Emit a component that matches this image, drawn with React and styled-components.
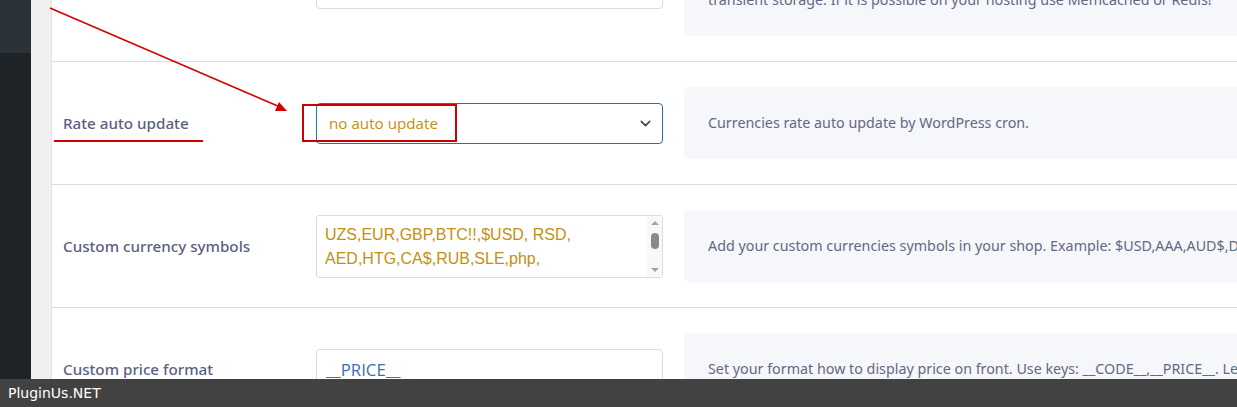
import React from "react";
import styled, { createGlobalStyle } from "styled-components";
import { ChevronDown } from "lucide-react";

const GlobalStyle = createGlobalStyle`
  * {
    box-sizing: border-box;
    margin: 0;
    padding: 0;
  }
  body {
    background: #f0f0f1;
    overflow: hidden;
    font-family: "Noto Sans", Lato, sans-serif;
  }
`;

const Layout = styled.div`
  display: flex;
  height: 100vh;
  width: 100%;
`;

const Sidebar = styled.aside`
  width: 31px;
  flex-shrink: 0;
  background: #1d2327;
`;

const SidebarActive = styled.div`
  height: 53px;
  background: #2c3338;
`;

const Gutter = styled.div`
  width: 20px;
  flex-shrink: 0;
  background: #f0f0f1;
`;

const Panel = styled.main`
  flex: 1;
  background: #fff;
  border-left: 1px solid #e4e4e7;
  overflow: hidden;
`;

const SettingsList = styled.div`
  margin-top: -85px;
`;

const Row = styled.div`
  display: grid;
  grid-template-columns: 243px 347px 680px;
  column-gap: 21px;
  align-items: center;
  padding: 25px 0;
  border-bottom: 1px solid #dcdcde;
`;

const Label = styled.div`
  padding-left: 11px;
  font-size: 15.2px;
  font-weight: 500;
  color: #5b6080;
`;

const FieldWrap = styled.div`
  position: relative;
`;

const TextInput = styled.input`
  width: 100%;
  height: 41px;
  border: 1px solid #dcdcde;
  border-radius: 4px;
  padding: 0 9px;
  font-family: "Open Sans", "Noto Sans", sans-serif;
  font-size: 16.8px;
  color: ${(p) => p.$color || "#3c6fa6"};
  background: #fff;
  outline: none;
`;

const Select = styled.select`
  appearance: none;
  width: 100%;
  height: 41px;
  border: 1px solid #2271b1;
  border-radius: 4px;
  padding: 0 32px 0 12px;
  font-family: "Open Sans", "Noto Sans", sans-serif;
  font-size: 15.2px;
  color: #c4900f;
  background: #fff;
  outline: none;
`;

const SelectArrow = styled.span`
  position: absolute;
  right: 9px;
  top: 12px;
  display: flex;
  color: #3c434a;
  pointer-events: none;
`;

const TextArea = styled.textarea`
  display: block;
  width: 100%;
  height: 63px;
  border: 1px solid #dcdcde;
  border-radius: 3px;
  padding: 7px 24px 7px 8px;
  font-family: "Liberation Sans", Arial, sans-serif;
  font-size: 16px;
  line-height: 24px;
  color: #c4900f;
  resize: none;
  overflow: hidden;
  outline: none;
`;

const Scrollbar = styled.div`
  position: absolute;
  top: 1px;
  right: 1px;
  bottom: 1px;
  width: 15px;
  background: #f8f8f8;
  display: flex;
  flex-direction: column;
  align-items: center;
  justify-content: space-between;
  padding: 5px 0;
`;

const Arrow = styled.span`
  width: 0;
  height: 0;
  border-left: 4px solid transparent;
  border-right: 4px solid transparent;
  ${(p) =>
    p.$down
      ? "border-top: 4px solid #a3a3a3;"
      : "border-bottom: 4px solid #a3a3a3;"}
`;

const Thumb = styled.span`
  width: 8px;
  height: 16px;
  border-radius: 4px;
  background: #8a8a8a;
  margin-top: -10px;
`;

const Description = styled.div`
  background: #f6f7fb;
  border-radius: 5px;
  padding: 24px 24px;
  font-size: 14.3px;
  line-height: 24px;
  color: #636884;
  white-space: nowrap;
`;

const Footer = styled.footer`
  position: fixed;
  left: 0;
  right: 0;
  bottom: 0;
  height: 28px;
  background: #424242;
  display: flex;
  align-items: center;
  padding-left: 8px;
  font-family: "DejaVu Sans", sans-serif;
  font-size: 14px;
  color: #fff;
`;

const Annotations = styled.svg`
  position: fixed;
  top: 0;
  left: 0;
  pointer-events: none;
`;

const rows = [
  {
    label: "Rate auto update",
    field: "select",
    value: "no auto update",
    desc: "Currencies rate auto update by WordPress cron.",
  },
  {
    label: "Custom currency symbols",
    field: "textarea",
    value: "UZS,EUR,GBP,BTC!!,$USD, RSD,\nAED,HTG,CA$,RUB,SLE,php,",
    desc: "Add your custom currencies symbols in your shop. Example: $USD,AAA,AUD$,DDD,X $ - separated by commas",
  },
  {
    label: "Custom price format",
    field: "input",
    value: "__PRICE__",
    desc: "Set your format how to display price on front. Use keys: __CODE__,__PRICE__. Leave it empty to use default format.",
  },
];

function Field({ row }) {
  if (row.field === "select") {
    return (
      <FieldWrap>
        <Select defaultValue={row.value}>
          <option>{row.value}</option>
          <option>hourly</option>
          <option>twicedaily</option>
          <option>daily</option>
        </Select>
        <SelectArrow>
          <ChevronDown size={17} strokeWidth={2.2} />
        </SelectArrow>
      </FieldWrap>
    );
  }
  if (row.field === "textarea") {
    return (
      <FieldWrap>
        <TextArea readOnly value={row.value} />
        <Scrollbar>
          <Arrow />
          <Thumb />
          <Arrow $down />
        </Scrollbar>
      </FieldWrap>
    );
  }
  return (
    <FieldWrap>
      <TextInput readOnly value={row.value} />
    </FieldWrap>
  );
}

export default function App() {
  return (
    <>
      <GlobalStyle />
      <Layout>
        <Sidebar>
          <SidebarActive />
        </Sidebar>
        <Gutter />
        <Panel>
          <SettingsList>
            <Row>
              <Label>Currency storage</Label>
              <FieldWrap>
                <TextInput readOnly value="transient" $color="#c4900f" />
              </FieldWrap>
              <Description>
                Currency data storage. It is not recommended to use session if your site has a lot of visitors, use
                <br />
                transient storage. If it is possible on your hosting use Memcached or Redis!
              </Description>
            </Row>
            {rows.map((row) => (
              <Row key={row.label}>
                <Label>{row.label}</Label>
                <Field row={row} />
                <Description>{row.desc}</Description>
              </Row>
            ))}
          </SettingsList>
        </Panel>
      </Layout>

      <Annotations width="1237" height="407" viewBox="0 0 1237 407">
        <line x1="50" y1="8" x2="280" y2="107" stroke="#d40000" strokeWidth="1.6" />
        <polygon points="287,111 279,102 275,111" fill="#d40000" />
        <rect x="303" y="105" width="153" height="36" fill="none" stroke="#cc0000" strokeWidth="2" />
        <line x1="54" y1="141" x2="203" y2="141" stroke="#d40000" strokeWidth="2" />
      </Annotations>

      <Footer>PluginUs.NET</Footer>
    </>
  );
}
